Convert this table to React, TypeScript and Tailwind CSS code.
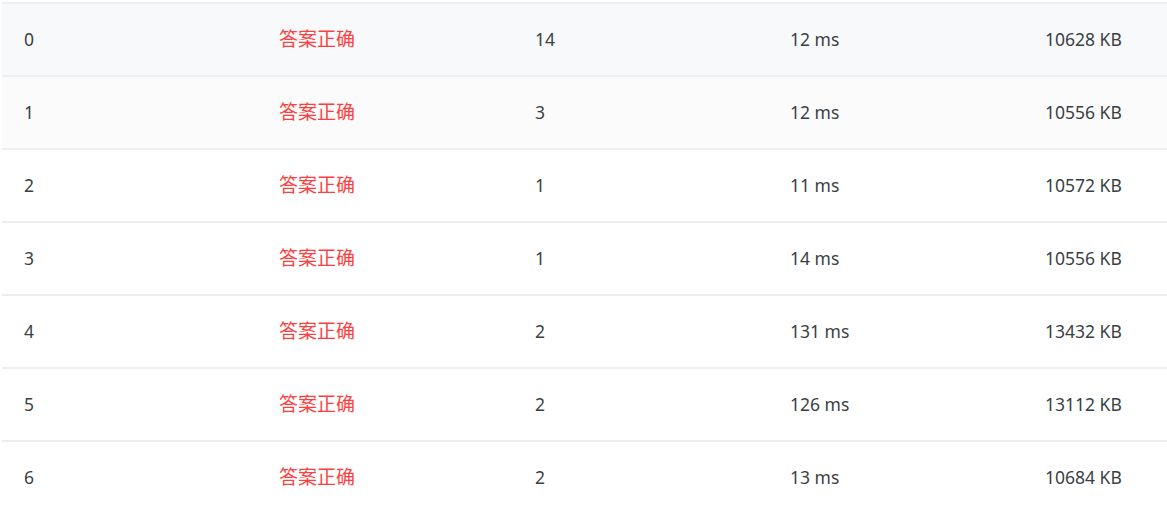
const rows = [
  { id: 0, score: "14", time: "12 ms", mem: "10628 KB", bg: "bg-[#f8f9fb]" },
  { id: 1, score: "3", time: "12 ms", mem: "10556 KB", bg: "bg-[#fafbfa]" },
  { id: 2, score: "1", time: "11 ms", mem: "10572 KB", bg: "bg-white" },
  { id: 3, score: "1", time: "14 ms", mem: "10556 KB", bg: "bg-white" },
  { id: 4, score: "2", time: "131 ms", mem: "13432 KB", bg: "bg-white" },
  { id: 5, score: "2", time: "126 ms", mem: "13112 KB", bg: "bg-white" },
  { id: 6, score: "2", time: "13 ms", mem: "10684 KB", bg: "bg-white" },
];

export default function App() {
  return (
    <div className="h-[506px] w-[1167px] overflow-hidden bg-white pl-[2px] pt-[2px] font-['Noto_Sans','Noto_Sans_CJK_SC',sans-serif] text-[17.5px] text-[#3a3f45]">
      <div className="border-t-2 border-[#eceef0]">
        {rows.map((r) => (
          <div
            key={r.id}
            className={`grid h-[73px] grid-cols-[255px_256px_255px_255px_1fr] items-center border-b-2 border-[#eceef0] ${r.bg}`}
          >
            <span className="pl-[22px]">{r.id}</span>
            <span className="pl-[22px] text-[19px] text-[#fc3f3f]">答案正确</span>
            <span className="pl-[22px]">{r.score}</span>
            <span className="pl-[22px]">{r.time}</span>
            <span className="pl-[22px]">{r.mem}</span>
          </div>
        ))}
      </div>
    </div>
  );
}
